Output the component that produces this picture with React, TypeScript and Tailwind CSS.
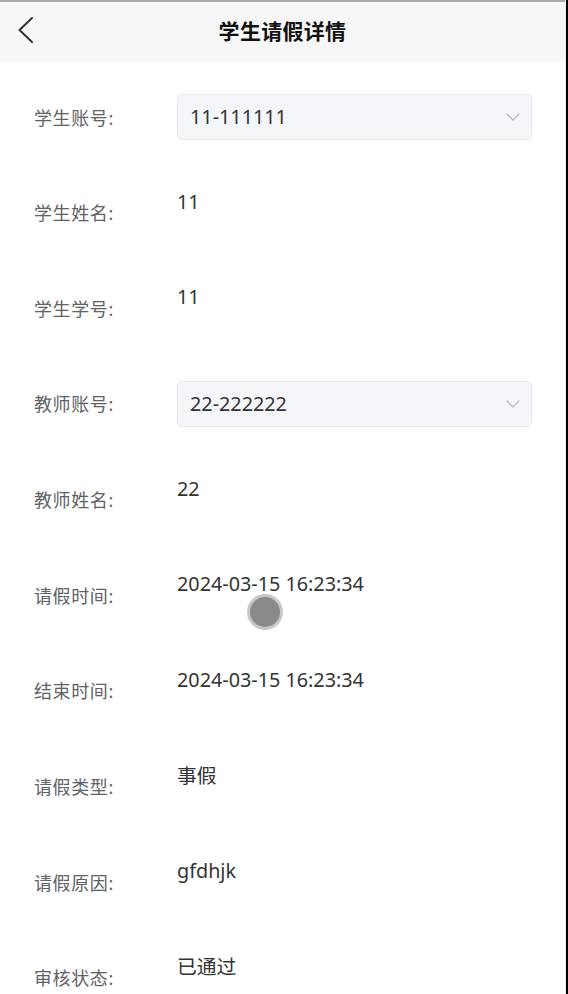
type Row = { label: string; value: string; select?: boolean };

const rows: Row[] = [
  { label: "学生账号:", value: "11-111111", select: true },
  { label: "学生姓名:", value: "11" },
  { label: "学生学号:", value: "11" },
  { label: "教师账号:", value: "22-222222", select: true },
  { label: "教师姓名:", value: "22" },
  { label: "请假时间:", value: "2024-03-15 16:23:34" },
  { label: "结束时间:", value: "2024-03-15 16:23:34" },
  { label: "请假类型:", value: "事假" },
  { label: "请假原因:", value: "gfdhjk" },
  { label: "审核状态:", value: "已通过" },
];

const font = { fontFamily: '"Noto Sans", "Noto Sans CJK SC", sans-serif' };

export default function App() {
  return (
    <div className="w-[568px] h-[994px] flex overflow-hidden bg-white" style={font}>
      <div className="flex-1 border-t-2 border-[#a9acae] relative">
        {/* header */}
        <div className="h-[60px] bg-[#f7f7f7] flex items-center relative">
          <svg className="absolute left-[16px] top-[14px]" width="20" height="28" viewBox="0 0 20 28" fill="none">
            <polyline points="16,2 3.5,14 16,26" stroke="#333" strokeWidth="2" strokeLinecap="round" strokeLinejoin="round" />
          </svg>
          <div className="flex-1 text-center text-[21px] font-bold text-[#111] tracking-[0.3px]">学生请假详情</div>
        </div>

        <div className="pt-[32px] pl-[34px]">
          {rows.map((r, i) => (
            <div key={"row#" + i} className="flex h-[95.67px]">
              <div className="w-[143px] h-[46px] flex items-center pt-[2px] text-[18px] tracking-[0.6px] text-[#606266]">{r.label}</div>
              {r.select ? (
                <div className="w-[355px] h-[46px] rounded-[5px] border border-[#e6e9ef] bg-[#f4f6fa] flex items-center justify-between pl-[12px] pr-[11px]">
                  <span className="text-[19.8px] text-[#333]">{r.value}</span>
                  <svg width="14" height="8" viewBox="0 0 14 8" fill="none">
                    <polyline points="1,1 7,7 13,1" stroke="#b8bcc4" strokeWidth="1.3" strokeLinecap="round" strokeLinejoin="round" />
                  </svg>
                </div>
              ) : (
                <div className="text-[19.8px] leading-[24px] text-[#333]">{r.value}</div>
              )}
            </div>
          ))}
        </div>

        {/* touch indicator */}
        <div className="absolute left-[247px] top-[592px] w-[36px] h-[36px] rounded-full bg-[#8a8a8a] border-[3px] border-[#c8c8c8]" />
      </div>
      <div className="w-px bg-[#e9eef5]" />
      <div className="w-[2px] bg-black" />
    </div>
  );
}
